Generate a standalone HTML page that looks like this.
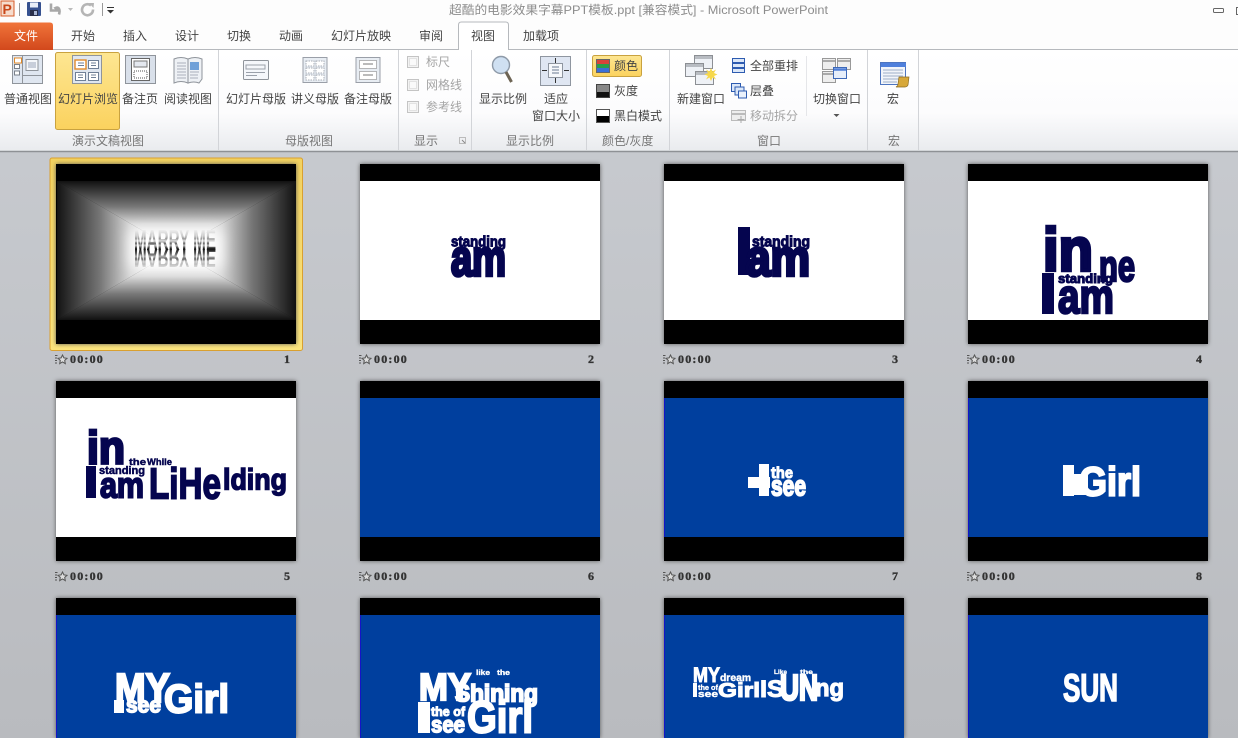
<!DOCTYPE html>
<html><head><meta charset="utf-8"><style>
html,body{margin:0;padding:0;width:1238px;height:738px;overflow:hidden;background:#c5c8cc}
svg{display:block}
text{font-family:"Liberation Sans","Noto Sans CJK SC",sans-serif}
.c{font-size:12px;fill:#444}
.g{font-size:12px;fill:#777}
.d{font-size:12px;fill:#a5a5a5}
.n{font-family:"Liberation Sans",sans-serif;font-weight:bold;fill:#05054f;stroke:#05054f;stroke-width:1}
.w{font-family:"Liberation Sans",sans-serif;font-weight:bold;fill:#fff;stroke:#fff;stroke-width:1}
.m{font-family:"Liberation Serif",serif;font-weight:bold;font-size:12px;fill:#333;stroke:#333;stroke-width:.35;letter-spacing:1.2px}
</style></head><body>
<svg width="1238" height="738" viewBox="0 0 1238 738" xmlns="http://www.w3.org/2000/svg">
<defs>
<filter id="blur" x="-30%" y="-50%" width="160%" height="200%"><feGaussianBlur stdDeviation="7"/></filter>
<linearGradient id="bg" x1="0" y1="0" x2="0" y2="1"><stop offset="0" stop-color="#cacdd2"/><stop offset="1" stop-color="#b9bbbf"/></linearGradient>
<linearGradient id="rb" x1="0" y1="0" x2="0" y2="1"><stop offset="0" stop-color="#fff"/><stop offset=".62" stop-color="#fcfcfd"/><stop offset="1" stop-color="#e9ebee"/></linearGradient>
<linearGradient id="fi" x1="0" y1="0" x2="0" y2="1"><stop offset="0" stop-color="#f0743a"/><stop offset="1" stop-color="#d2481c"/></linearGradient>
<linearGradient id="ye" x1="0" y1="0" x2="0" y2="1"><stop offset="0" stop-color="#fde692"/><stop offset="1" stop-color="#fbd25e"/></linearGradient>
<linearGradient id="sel" x1="0" y1="0" x2="0" y2="1"><stop offset="0" stop-color="#f3d25f"/><stop offset="1" stop-color="#fbe47c"/></linearGradient>
<linearGradient id="gt" gradientUnits="userSpaceOnUse" x1="0" y1="181" x2="0" y2="250"><stop offset="0" stop-color="#111"/><stop offset=".37" stop-color="#777"/><stop offset=".62" stop-color="#d8d8d8"/><stop offset=".85" stop-color="#fff"/></linearGradient>
<linearGradient id="gb" gradientUnits="userSpaceOnUse" x1="0" y1="320" x2="0" y2="250"><stop offset="0" stop-color="#111"/><stop offset=".37" stop-color="#777"/><stop offset=".62" stop-color="#d8d8d8"/><stop offset=".85" stop-color="#fff"/></linearGradient>
<linearGradient id="gl" gradientUnits="userSpaceOnUse" x1="56" y1="0" x2="176" y2="0"><stop offset="0" stop-color="#111"/><stop offset=".37" stop-color="#777"/><stop offset=".62" stop-color="#d8d8d8"/><stop offset=".85" stop-color="#fff"/></linearGradient>
<linearGradient id="gr" gradientUnits="userSpaceOnUse" x1="296" y1="0" x2="176" y2="0"><stop offset="0" stop-color="#111"/><stop offset=".37" stop-color="#777"/><stop offset=".62" stop-color="#d8d8d8"/><stop offset=".85" stop-color="#fff"/></linearGradient>
<linearGradient id="tx" gradientUnits="userSpaceOnUse" x1="0" y1="229" x2="0" y2="252">
<stop offset="0" stop-color="#f4f4f4"/><stop offset=".3" stop-color="#ccc"/><stop offset=".42" stop-color="#999"/><stop offset=".52" stop-color="#ddd"/><stop offset=".62" stop-color="#666"/><stop offset=".72" stop-color="#bbb"/><stop offset=".84" stop-color="#222"/><stop offset="1" stop-color="#000"/></linearGradient>
<linearGradient id="tx2" gradientUnits="userSpaceOnUse" x1="0" y1="249" x2="0" y2="228">
<stop offset="0" stop-color="#111"/><stop offset=".2" stop-color="#555"/><stop offset=".35" stop-color="#aaa"/><stop offset=".48" stop-color="#666"/><stop offset=".6" stop-color="#ccc"/><stop offset=".72" stop-color="#bbb"/><stop offset="1" stop-color="#fafafa"/></linearGradient>
<g id="star"><path d="M-3 -3.500h2.500M-3 -1h2M-3 1.500h2M-3 4h2" stroke="#555" stroke-width="1" fill="none"/><path d="M4.500 -4l1.400 2.900 3.100.4-2.300 2.100.6 3.200-2.800-1.600-2.800 1.600.6-3.200-2.300-2.100 3.100-.4z" stroke="#555" stroke-width="1" fill="#ddd"/></g>
<g id="win"><rect x="0" y="0" width="18" height="13" fill="#eef1f6" stroke="#8c8f94"/><rect x="0.500" y="0.500" width="17" height="3" fill="#b8bcc2"/></g>
<g id="chk"><rect x="0.500" y="0.500" width="11" height="11" fill="#f3f3f3" stroke="#c4c4c4"/><rect x="2.500" y="2.500" width="7" height="7" fill="#fafafa" stroke="#e2e2e2"/></g>
</defs>

<rect width="1238" height="738" fill="url(#bg)"/>
<!-- title bar + tabs -->
<rect width="1238" height="50" fill="#fdfdfd"/>
<rect x="1" y="1" width="13" height="15" fill="#f6dccd" stroke="#d75a26"/>
<text x="2.500" y="14" style="font-size:14px;font-weight:bold;fill:#c8471a">P</text>
<path d="M19.500 3v13M102.500 3v13" stroke="#999"/>
<rect x="27" y="2" width="14" height="14" fill="#36518f" rx="1"/><rect x="30" y="2.500" width="8" height="5" fill="#e8eef8"/><rect x="30" y="10" width="8" height="6" fill="#2a2f49"/><rect x="34" y="11" width="3" height="4" fill="#aab6d2"/>
<path d="M51 3.500v7h7l-2.500-2.500c3-1.500 5 1 3.500 6.500" fill="none" stroke="#a8a8a8" stroke-width="2.600"/>
<path d="M68 8h5l-2.500 3z" fill="#bbb"/>
<path d="M91 5.500a5.500 5.500 0 1 0 2 4" fill="none" stroke="#b5b5b5" stroke-width="2.600"/><path d="M89 3l5 0-.5 5z" fill="#b5b5b5"/>
<path d="M107 7.500h7" stroke="#333"/><path d="M107 10h7l-3.500 3.500z" fill="#333"/>
<text x="449" y="14" style="font-size:12px;fill:#8c8c8c" textLength="379" lengthAdjust="spacingAndGlyphs">超酷的电影效果字幕PPT模板.ppt [兼容模式]  -  Microsoft PowerPoint</text>
<rect x="1213.500" y="8.500" width="10" height="4" rx="1" fill="none" stroke="#666"/>
<rect x="1236.500" y="7.500" width="6" height="7" fill="none" stroke="#666"/>

<!-- ribbon -->
<rect x="0" y="50" width="1238" height="101" fill="url(#rb)"/>
<path d="M0 49.500H458M508 49.500H1238" stroke="#b6b9bd"/>
<path d="M0 151.500H1238" stroke="#8e9195" stroke-width="1.400"/>
<path d="M0 50V22.500H50q3 0 3 3V50z" fill="url(#fi)"/>
<path d="M458.500 50V25q0-3 3-3h44q3 0 3 3v25" fill="#fff" stroke="#b6b9bd"/>
<text x="14" y="40" style="font-size:12px;fill:#fff">文件</text>
<text class="c" x="71" y="40">开始</text><text class="c" x="123" y="40">插入</text><text class="c" x="175" y="40">设计</text><text class="c" x="227" y="40">切换</text><text class="c" x="279" y="40">动画</text><text class="c" x="331" y="40">幻灯片放映</text><text class="c" x="419" y="40">审阅</text><text class="c" x="471" y="40">视图</text><text class="c" x="523" y="40">加载项</text>

<g stroke="#d2d4d8"><path d="M218.500 50v100M398.500 50v100M471.500 50v100M586.500 50v100M669.500 50v100M867.500 50v100M918.500 50v100"/><path d="M806.500 56v60" stroke="#e5e6e9"/></g>
<rect x="55.500" y="52.500" width="64" height="77" rx="2" fill="url(#ye)" stroke="#c9a23f"/>

<!-- view icons -->
<g>
<rect x="12.500" y="55.500" width="30" height="28" fill="#dfe6f0" stroke="#8f949b"/>
<rect x="14.500" y="58" width="7" height="5" fill="#fff" stroke="#e08a2a"/><rect x="14.500" y="64.500" width="5" height="4" fill="#fff" stroke="#7a808a"/><rect x="14.500" y="71" width="5" height="4" fill="#fff" stroke="#7a808a"/>
<path d="M22.500 56v27M22.500 75.500h20" stroke="#8f949b" fill="none"/><rect x="26" y="59.500" width="12" height="11" fill="#f5f7fb" stroke="#8f949b"/>
<path d="M28 63h8M28 65h8M28 67h8" stroke="#9aa6b8"/>
<rect x="72.500" y="55.500" width="29" height="28" fill="#dfe6f0" stroke="#8f949b"/>
<rect x="75" y="60" width="11" height="9" fill="#fff" stroke="#e08a2a" stroke-width="1.400"/><rect x="88.500" y="60.500" width="10" height="8" fill="#fff" stroke="#6f7f96"/><rect x="75.500" y="72.500" width="10" height="8" fill="#fff" stroke="#6f7f96"/><rect x="88.500" y="72.500" width="10" height="8" fill="#fff" stroke="#6f7f96"/>
<path d="M78 63h6M78 65.500h6M91 63h5M91 65.500h5M78 75h5M78 77.500h5M91 75h5M91 77.500h5" stroke="#6f7f96"/>
<rect x="125.500" y="55.500" width="30" height="28" fill="#d9e0ea" stroke="#8f949b"/><rect x="131.500" y="58.500" width="18" height="22" fill="#fff" stroke="#666"/><rect x="134" y="61" width="13" height="6" fill="#e4e8ef" stroke="#777"/><rect x="134" y="71" width="13" height="7" fill="#fff" stroke="#555" stroke-dasharray="1 1"/>
<path d="M174 59q7-3 14 0v24q-7-3-14 0zM188 59q7-3 14 0v20l-3 4q-5-2-11 0z" fill="#eef1f5" stroke="#8f949b"/>
<path d="M177 63h9M177 66h9M177 69h9M177 72h9M177 75h9M177 78h9" stroke="#aab0ba"/><rect x="190" y="62" width="9" height="8" fill="#6fa0d8"/><path d="M190 72h9M190 75h8M190 78h8" stroke="#aab0ba"/>
<!-- master -->
<rect x="243.500" y="60.500" width="25" height="19" rx="1" fill="#f5f7fb" stroke="#8f949b"/><path d="M246 65h19v4h-19zM246 72.500h19M246 75.500h11" fill="none" stroke="#9aa0aa"/>
<rect x="303" y="57.500" width="24" height="25" fill="#e8edf3" stroke="#9a9fa8"/><path d="M306 61h8v5h-8zM316 61h8v5h-8zM306 68h8v5h-8zM316 68h8v5h-8zM306 75h8v5h-8zM316 75h8v5h-8z" fill="#fff" stroke="#a8adb5" stroke-dasharray="1.500 1"/>
<rect x="356" y="57.500" width="24" height="25" fill="#e8edf3" stroke="#9a9fa8"/><rect x="359.500" y="60.500" width="17" height="8" fill="#fff" stroke="#777" stroke-dasharray="1 1"/><rect x="359.500" y="71.500" width="17" height="8" fill="#fff" stroke="#777" stroke-dasharray="1 1"/><path d="M363 64h10M363 75h10" stroke="#777"/>
<!-- zoom -->
<circle cx="501" cy="65" r="8.500" fill="#cfe0f2" stroke="#8e9aa8" stroke-width="1.400"/><path d="M506 72l5.500 10" stroke="#6d6454" stroke-width="3"/>
<rect x="540.500" y="56.500" width="30" height="29" fill="#dfe6f2" stroke="#8f96a0"/><rect x="548.500" y="63.500" width="14" height="14" fill="#f6f8fb" stroke="#8f96a0"/><path d="M552 67h7M552 70h7M552 73h7" stroke="#6b7a90"/><path d="M555.500 58v5M555.500 78v5M542 70.500h5M564 70.500h5" stroke="#333"/>
<!-- colour -->
<rect x="592.500" y="55.500" width="49" height="21" rx="2" fill="url(#ye)" stroke="#c9a23f"/>
<rect x="596" y="59" width="14" height="14" fill="#2a9e4a"/><rect x="596" y="59" width="14" height="5" fill="#d8433a"/><rect x="596" y="68" width="14" height="5" fill="#3a6fd8"/><rect x="596.500" y="59.500" width="13" height="13" fill="none" stroke="#666"/>
<rect x="596.500" y="84.500" width="13" height="13" fill="#888" stroke="#444"/><rect x="597" y="92" width="12" height="5" fill="#111"/>
<rect x="596.500" y="109.500" width="13" height="13" fill="#fff" stroke="#555"/><rect x="597" y="116" width="12" height="6" fill="#000"/>
<!-- window -->
<use href="#win" x="694.500" y="55.500"/><use href="#win" x="685.500" y="63.500"/><use href="#win" x="695.500" y="71.500"/>
<path d="M711 68l1.500 3.500 3.500-2-2 3.500 3.500 1.500-3.500 1.500 2 3.500-3.500-2-1.500 3.500-1.500-3.500-3.500 2 2-3.500-3.500-1.500 3.500-1.500-2-3.500 3.500 2z" fill="#f7d84a"/>
<rect x="732.500" y="58.500" width="12" height="14" fill="#dbe7f8" stroke="#2d5bb0"/><path d="M733 63h11M733 68h11" stroke="#2d5bb0" stroke-width="2"/>
<rect x="731.500" y="83.500" width="9" height="8" fill="#dbe7f8" stroke="#2d5bb0"/><rect x="735" y="87" width="9" height="8" fill="#dbe7f8" stroke="#2d5bb0"/><rect x="738.500" y="91" width="8" height="7" fill="#eaf1fb" stroke="#2d5bb0"/>
<rect x="731.500" y="110.500" width="14" height="10" fill="#eee" stroke="#bbb"/><path d="M731 114h15" stroke="#bbb" stroke-width="2"/><path d="M741 116v7M737.500 119.500h7" stroke="#aaa"/>
<rect x="822.500" y="58.500" width="13" height="11" fill="#eee" stroke="#999"/><rect x="837.500" y="58.500" width="13" height="11" fill="#eee" stroke="#999"/><rect x="822.500" y="71.500" width="13" height="11" fill="#eee" stroke="#999"/><path d="M823 61h12M838 61h12M823 74h12" stroke="#aaa" stroke-width="2"/>
<rect x="833.500" y="67.500" width="13" height="11" fill="#e6eefa" stroke="#3c68b8"/><path d="M834 69.500h12" stroke="#4f7fd8" stroke-width="2.500"/>
<path d="M833.500 114h6l-3 3z" fill="#555"/>
<rect x="880.500" y="62.500" width="25" height="22" fill="#f2f5fa" stroke="#4d75c0"/><rect x="881" y="63" width="25" height="4" fill="#4f80dc"/><path d="M883 70h20M883 73h20M883 76h20M883 79h20M883 82h14" stroke="#9fb0c8"/>
<path d="M899 77h10l-1 8q-1 2-3 2h-9q2-1 2-3z" fill="#d7a83a" stroke="#8a6a20" stroke-width=".7"/>
</g>
<!-- ribbon labels -->
<g>
<text class="c" x="4" y="103">普通视图</text><text class="c" x="58" y="103">幻灯片浏览</text><text class="c" x="122" y="103">备注页</text><text class="c" x="164" y="103">阅读视图</text>
<text class="c" x="226" y="103">幻灯片母版</text><text class="c" x="291" y="103">讲义母版</text><text class="c" x="344" y="103">备注母版</text>
<use href="#chk" x="407" y="56"/><use href="#chk" x="407" y="79"/><use href="#chk" x="407" y="101"/>
<text class="d" x="426" y="66">标尺</text><text class="d" x="426" y="89">网格线</text><text class="d" x="426" y="111">参考线</text>
<text class="c" x="479" y="103">显示比例</text><text class="c" x="544" y="103">适应</text><text class="c" x="532" y="120">窗口大小</text>
<text class="c" x="614" y="70">颜色</text><text class="c" x="614" y="95">灰度</text><text class="c" x="614" y="120">黑白模式</text>
<text class="c" x="677" y="103">新建窗口</text><text class="c" x="750" y="70">全部重排</text><text class="c" x="750" y="95">层叠</text><text class="d" x="750" y="120">移动拆分</text>
<text class="c" x="813" y="103">切换窗口</text><text class="c" x="887" y="103">宏</text>
<text class="g" x="72" y="145">演示文稿视图</text><text class="g" x="285" y="145">母版视图</text><text class="g" x="414" y="145">显示</text><text class="g" x="506" y="145">显示比例</text><text class="g" x="602" y="145">颜色/灰度</text><text class="g" x="757" y="145">窗口</text><text class="g" x="888" y="145">宏</text>
<path d="M459.500 137.500h6v6h-6z" fill="none" stroke="#bbb"/><path d="M462 140l3 3" stroke="#888"/>
</g>

<!-- slide frames -->
<rect x="50" y="158" width="252.500" height="192.500" rx="2" fill="url(#sel)" stroke="#d9a030"/>
<g style="filter:drop-shadow(0 0 2px #555)">
<rect x="56" y="164" width="240" height="180" fill="#000"/>
<rect x="360" y="164" width="240" height="180" fill="#000"/><rect x="664" y="164" width="240" height="180" fill="#000"/><rect x="968" y="164" width="240" height="180" fill="#000"/>
<rect x="56" y="381" width="240" height="180" fill="#000"/><rect x="360" y="381" width="240" height="180" fill="#000"/><rect x="664" y="381" width="240" height="180" fill="#000"/><rect x="968" y="381" width="240" height="180" fill="#000"/>
<rect x="56" y="598" width="240" height="140" fill="#000"/><rect x="360" y="598" width="240" height="140" fill="#000"/><rect x="664" y="598" width="240" height="140" fill="#000"/><rect x="968" y="598" width="240" height="140" fill="#000"/>
</g>
<!-- slide 1 -->
<path d="M57 181H296L176 250z" fill="url(#gt)"/><path d="M57 320H296L176 250z" fill="url(#gb)"/><path d="M57 181V320L176 250z" fill="url(#gl)"/><path d="M296 181V320L176 250z" fill="url(#gr)"/>
<rect x="130" y="230" width="92" height="38" fill="#fff" filter="url(#blur)"/>
<text x="134" y="250" font-size="29" textLength="82" lengthAdjust="spacingAndGlyphs" style="font-weight:bold;font-family:'Liberation Sans',sans-serif" fill="url(#tx)">MARRY ME</text>
<g transform="translate(0 498) scale(1 -1)"><text x="134" y="249" font-size="26" textLength="82" lengthAdjust="spacingAndGlyphs" style="font-weight:bold;font-family:'Liberation Sans',sans-serif" fill="url(#tx2)">MARRY ME</text></g>
<!-- white slides -->
<rect x="360" y="181" width="240" height="139" fill="#fff"/><rect x="664" y="181" width="240" height="139" fill="#fff"/><rect x="968" y="181" width="240" height="139" fill="#fff"/><rect x="56" y="398" width="240" height="139" fill="#fff"/>
<!-- blue slides -->
<g fill="#003f9e"><rect x="360" y="398" width="240" height="139"/><rect x="664" y="398" width="240" height="139"/><rect x="968" y="398" width="240" height="139"/><rect x="56" y="615" width="240" height="123"/><rect x="360" y="615" width="240" height="123"/><rect x="664" y="615" width="240" height="123"/><rect x="968" y="615" width="240" height="123"/></g>
<path d="M664.500 398v139M968.500 398v139M56.500 615v123M360.500 615v123M664.500 615v123M968.500 615v123" stroke="#1414c8"/>

<!-- slide 2 -->
<text class="n" x="451" y="246.500" font-size="15" textLength="55" lengthAdjust="spacingAndGlyphs">standing</text>
<text class="n" x="451" y="275.500" font-size="51" textLength="55" lengthAdjust="spacingAndGlyphs" style="stroke-width:3.500">am</text>
<!-- slide 3 -->
<rect x="738" y="227" width="12" height="48" fill="#05054f"/>
<text class="n" x="752" y="246.500" font-size="15" textLength="58" lengthAdjust="spacingAndGlyphs">standing</text>
<text class="n" x="746" y="275.500" font-size="51" textLength="64" lengthAdjust="spacingAndGlyphs" style="stroke-width:3.500">am</text>
<!-- slide 4 -->
<text class="n" x="1043" y="270.500" font-size="60" textLength="50" lengthAdjust="spacingAndGlyphs" style="stroke-width:3.500">in</text>
<rect x="1042" y="273" width="12" height="41" fill="#05054f"/>
<text class="n" x="1058" y="313" font-size="48" textLength="56" lengthAdjust="spacingAndGlyphs" style="stroke-width:2.500">am</text>
<text class="n" x="1099" y="281" font-size="44" textLength="36" lengthAdjust="spacingAndGlyphs" style="stroke-width:2.500">ne</text>
<text class="n" x="1058" y="283" font-size="13" textLength="55" lengthAdjust="spacingAndGlyphs">standing</text>
<!-- slide 5 -->
<text class="n" x="87" y="463.500" font-size="46" textLength="38" lengthAdjust="spacingAndGlyphs" style="stroke-width:2.800">in</text>
<rect x="86" y="466" width="10" height="32" fill="#05054f"/>
<text class="n" x="99" y="474" font-size="11" textLength="46" lengthAdjust="spacingAndGlyphs" style="stroke-width:.5">standing</text>
<text class="n" x="100" y="497.500" font-size="36" textLength="44" lengthAdjust="spacingAndGlyphs" style="stroke-width:2">am</text>
<text class="n" x="129" y="465" font-size="9" textLength="17" lengthAdjust="spacingAndGlyphs" style="stroke-width:.4">the</text>
<text class="n" x="147" y="465" font-size="9" textLength="25" lengthAdjust="spacingAndGlyphs" style="stroke-width:.4">While</text>
<text class="n" x="149" y="498.500" font-size="44" textLength="72" lengthAdjust="spacingAndGlyphs" style="stroke-width:1.800">LiHe</text>
<text class="n" x="223" y="489.500" font-size="30" textLength="64" lengthAdjust="spacingAndGlyphs" style="stroke-width:1.500">lding</text>

<!-- slide 7 -->
<rect x="759" y="464" width="10" height="32" fill="#fff"/><rect x="748" y="477" width="22" height="11" fill="#fff"/>
<text class="w" x="771" y="478" font-size="16" textLength="22" lengthAdjust="spacingAndGlyphs">the</text>
<text class="w" x="771" y="495.500" font-size="29" textLength="35" lengthAdjust="spacingAndGlyphs" style="stroke-width:1.800">see</text>
<!-- slide 8 -->
<rect x="1063" y="465" width="11" height="31" fill="#fff"/>
<rect x="1074" y="474" width="14" height="21" fill="#fff"/>
<text class="w" x="1079" y="495.500" font-size="41" textLength="62" lengthAdjust="spacingAndGlyphs" style="stroke-width:2">Girl</text>
<!-- slide 9 -->
<text class="w" x="115" y="702" font-size="41" textLength="55" lengthAdjust="spacingAndGlyphs" style="stroke-width:2.200">MY</text>
<rect x="114" y="700" width="10" height="13" fill="#fff"/>
<text class="w" x="126" y="712.500" font-size="22" textLength="35" lengthAdjust="spacingAndGlyphs" style="stroke-width:1.500">see</text>
<text class="w" x="164" y="712.500" font-size="40" textLength="65" lengthAdjust="spacingAndGlyphs" style="stroke-width:2">Girl</text>
<!-- slide 10 -->
<text class="w" x="419" y="700" font-size="38" textLength="52" lengthAdjust="spacingAndGlyphs" style="stroke-width:2.200">MY</text>
<text class="w" x="455" y="701.500" font-size="24" textLength="83" lengthAdjust="spacingAndGlyphs" style="stroke-width:1.800">Shining</text>
<text class="w" x="476" y="675" font-size="7" textLength="14" lengthAdjust="spacingAndGlyphs" style="stroke-width:.3">like</text>
<text class="w" x="497" y="675" font-size="7" textLength="13" lengthAdjust="spacingAndGlyphs" style="stroke-width:.3">the</text>
<rect x="418" y="702" width="12" height="31" fill="#fff"/>
<text class="w" x="431" y="716" font-size="13" textLength="34" lengthAdjust="spacingAndGlyphs">the of</text>
<text class="w" x="431" y="732.500" font-size="23" textLength="34" lengthAdjust="spacingAndGlyphs" style="stroke-width:1.500">see</text>
<text class="w" x="467" y="732.500" font-size="45" textLength="66" lengthAdjust="spacingAndGlyphs" style="stroke-width:2">Girl</text>
<!-- slide 11 -->
<text class="w" x="693" y="682" font-size="21" textLength="27" lengthAdjust="spacingAndGlyphs">MY</text>
<text class="w" x="720" y="681" font-size="10" textLength="31" lengthAdjust="spacingAndGlyphs" style="stroke-width:.4">dream</text>
<rect x="693" y="683" width="4" height="14" fill="#fff"/>
<text class="w" x="698" y="690" font-size="7" textLength="20" lengthAdjust="spacingAndGlyphs" style="stroke-width:.3">the of</text>
<text class="w" x="698" y="697" font-size="9" textLength="20" lengthAdjust="spacingAndGlyphs" style="stroke-width:.4">see</text>
<text class="w" x="718" y="697" font-size="20" textLength="42" lengthAdjust="spacingAndGlyphs">Girl</text>
<text class="w" x="760" y="697" font-size="24" textLength="24" lengthAdjust="spacingAndGlyphs">IS</text>
<text class="w" x="780" y="700" font-size="36" textLength="38" lengthAdjust="spacingAndGlyphs" style="stroke-width:2.500">UN</text>
<text class="w" x="774" y="674" font-size="6.500" textLength="13" lengthAdjust="spacingAndGlyphs" style="stroke-width:.3">Like</text>
<text class="w" x="800" y="674" font-size="6.500" textLength="13" lengthAdjust="spacingAndGlyphs" style="stroke-width:.3">the</text>
<text class="w" x="815" y="696" font-size="24" textLength="29" lengthAdjust="spacingAndGlyphs" style="stroke-width:1.200">ng</text>
<!-- slide 12 -->
<text class="w" x="1063" y="701" font-size="39" textLength="55" lengthAdjust="spacingAndGlyphs" style="stroke-width:1.600">SUN</text>

<!-- captions -->
<use href="#star" x="58" y="359"/><use href="#star" x="362" y="359"/><use href="#star" x="666" y="359"/><use href="#star" x="970" y="359"/>
<use href="#star" x="58" y="576"/><use href="#star" x="362" y="576"/><use href="#star" x="666" y="576"/><use href="#star" x="970" y="576"/>
<text class="m" x="70" y="363">00:00</text><text class="m" x="374" y="363">00:00</text><text class="m" x="678" y="363">00:00</text><text class="m" x="982" y="363">00:00</text>
<text class="m" x="70" y="580">00:00</text><text class="m" x="374" y="580">00:00</text><text class="m" x="678" y="580">00:00</text><text class="m" x="982" y="580">00:00</text>
<text class="m" x="284" y="363">1</text><text class="m" x="588" y="363">2</text><text class="m" x="892" y="363">3</text><text class="m" x="1196" y="363">4</text>
<text class="m" x="284" y="580">5</text><text class="m" x="588" y="580">6</text><text class="m" x="892" y="580">7</text><text class="m" x="1196" y="580">8</text>
</svg>
</body></html>
